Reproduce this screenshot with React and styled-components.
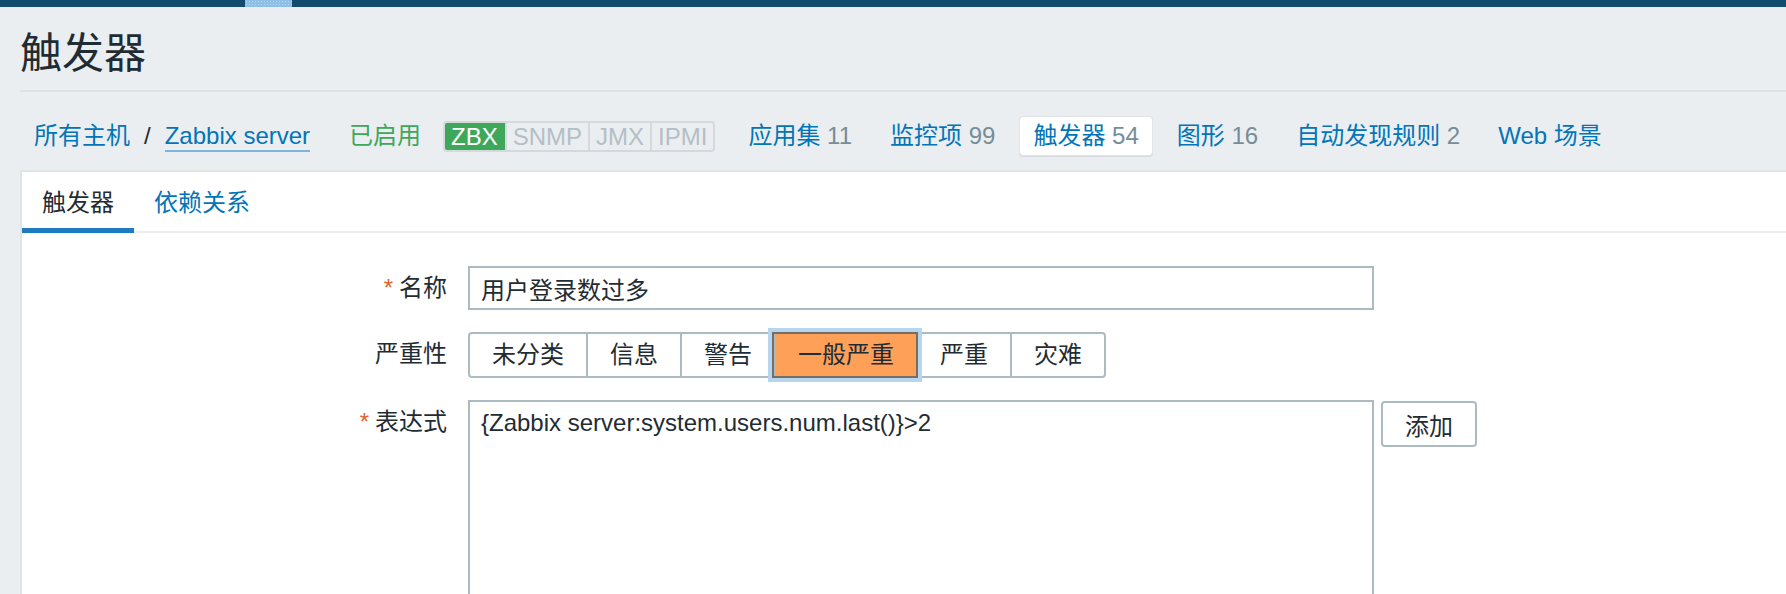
import React, { useState } from 'react'
import styled, { createGlobalStyle } from 'styled-components'

const GlobalStyle = createGlobalStyle`
  html, body {
    margin: 0;
    padding: 0;
    background: #ebeef0;
    overflow: hidden;
  }
  body {
    font-family: "Liberation Sans", "Noto Sans CJK SC", sans-serif;
    color: #1f2c33;
  }
`

const severities = ['未分类', '信息', '警告', '一般严重', '严重', '灾难']

const navItems = [
    { label: '应用集', count: 11 },
    { label: '监控项', count: 99 },
    { label: '触发器', count: 54, active: true },
    { label: '图形', count: 16 },
    { label: '自动发现规则', count: 2 },
    { label: 'Web 场景' },
]

function App() {
    const [severity, setSeverity] = useState('一般严重')
    const [tab, setTab] = useState('triggers')

    return (
        <>
            <GlobalStyle />
            <TopBar>
                <TopMark />
            </TopBar>
            <Page>
                <Title>触发器</Title>
                <NavBar>
                    <Crumbs>
                        <CrumbLink>所有主机</CrumbLink>
                        <Slash>/</Slash>
                        <CrumbLink $underline>Zabbix server</CrumbLink>
                    </Crumbs>
                    <Status>已启用</Status>
                    <Badges>
                        <Badge $on>ZBX</Badge>
                        <Badge>SNMP</Badge>
                        <Badge>JMX</Badge>
                        <Badge>IPMI</Badge>
                    </Badges>
                    <NavList>
                        {navItems.map((item) => (
                            <NavTab key={item.label} $active={item.active}>
                                {item.label}
                                {item.count !== undefined && <Count> {item.count}</Count>}
                            </NavTab>
                        ))}
                    </NavList>
                </NavBar>
                <Panel>
                    <TabStrip>
                        <Tab $active={tab === 'triggers'} onClick={() => setTab('triggers')}>触发器</Tab>
                        <Tab $active={tab === 'deps'} onClick={() => setTab('deps')}>依赖关系</Tab>
                    </TabStrip>
                    <Form>
                        <Label><Req>*</Req>名称</Label>
                        <TextInput defaultValue='用户登录数过多' />

                        <Label>严重性</Label>
                        <Severity>
                            {severities.map((s) => (
                                <SevButton key={s} $selected={s === severity} onClick={() => setSeverity(s)}>
                                    {s}
                                </SevButton>
                            ))}
                        </Severity>

                        <Label><Req>*</Req>表达式</Label>
                        <ExprRow>
                            <TextArea defaultValue='{Zabbix server:system.users.num.last()}>2' />
                            <AddButton>添加</AddButton>
                        </ExprRow>
                    </Form>
                </Panel>
            </Page>
        </>
    )
}

export default App

const TopBar = styled.div`
    height: 7px;
    background: #124b6e;
    padding-left: 245px;
    display: flex;
`

const TopMark = styled.div`
    width: 47px;
    background: #8fbfe6;
    background-image: radial-gradient(#b7d6f0 0.8px, transparent 0.9px);
    background-size: 3px 3px;
`

const Page = styled.div`
    padding-left: 20px;
`

const Title = styled.h1`
    margin: 0;
    padding-top: 22px;
    padding-bottom: 11px;
    font-size: 42px;
    line-height: 50px;
    font-weight: normal;
    color: #1f2c33;
    border-bottom: 2px solid #dde2e6;
`

const NavBar = styled.div`
    display: flex;
    align-items: center;
    height: 40px;
    margin-top: 24px;
    margin-bottom: 14px;
    font-size: 24px;
`

const Crumbs = styled.div`
    display: flex;
    align-items: center;
    gap: 14px;
    padding-left: 14px;
`

const CrumbLink = styled.a`
    color: #0275b8;
    line-height: 28px;
    border-bottom: 2px solid ${(p) => (p.$underline ? '#7db4dc' : 'transparent')};
    margin-top: 2px;
    cursor: pointer;
`

const Slash = styled.span`
    color: #1f2c33;
    line-height: 28px;
`

const Status = styled.span`
    color: #3da75a;
    margin-left: 39px;
    line-height: 32px;
`

const Badges = styled.div`
    display: flex;
    margin-left: 22px;
    height: 31px;
    border-radius: 4px;
    overflow: hidden;
    border: 2px solid #d3d9dd;
    box-sizing: border-box;
`

const Badge = styled.span`
    padding: 0 6px;
    line-height: 27px;
    background: ${(p) => (p.$on ? '#3da75a' : '#ebeef0')};
    color: ${(p) => (p.$on ? '#ffffff' : '#b3bfc7')};
    border-left: 2px solid #d3d9dd;
    &:first-child {
        border-left: none;
        margin: -2px 0 -2px -2px;
        padding: 2px 7px 2px 8px;
    }
`

const NavList = styled.div`
    display: flex;
    align-items: center;
    gap: 10px;
    margin-left: 19px;
`

const NavTab = styled.a`
    padding: 3px 13px;
    line-height: 32px;
    color: #0275b8;
    border-radius: 4px;
    border: 1px solid ${(p) => (p.$active ? '#dfe4e7' : 'transparent')};
    background: ${(p) => (p.$active ? '#ffffff' : 'transparent')};
    box-shadow: ${(p) => (p.$active ? '0 1px 0 #d5dbdf' : 'none')};
    white-space: nowrap;
    cursor: pointer;
`

const Count = styled.span`
    color: #768d99;
`

const Panel = styled.div`
    background: #ffffff;
    border: 2px solid #dfe4e7;
    border-right: none;
    border-bottom: none;
`

const TabStrip = styled.div`
    display: flex;
    border-bottom: 2px solid #ebeef0;
`

const Tab = styled.div`
    padding: 6px 20px 0;
    line-height: 50px;
    font-size: 24px;
    margin-bottom: -2px;
    color: ${(p) => (p.$active ? '#1f2c33' : '#0275b8')};
    border-bottom: 5px solid ${(p) => (p.$active ? '#1f7bbf' : 'transparent')};
    cursor: pointer;
`

const Form = styled.div`
    display: grid;
    grid-template-columns: 425px 1fr;
    column-gap: 21px;
    row-gap: 22px;
    padding-top: 33px;
    font-size: 24px;
`

const Label = styled.div`
    text-align: right;
    line-height: 44px;
    color: #1f2c33;
    white-space: nowrap;
`

const Req = styled.span`
    color: #e0622c;
    margin-right: 6px;
`

const TextInput = styled.input`
    box-sizing: border-box;
    width: 906px;
    height: 44px;
    padding: 0 11px;
    border: 2px solid #acbbc2;
    font: inherit;
    font-size: 24px;
    color: #1f2c33;
    outline: none;
`

const Severity = styled.div`
    display: flex;
    justify-self: start;
    border: 2px solid #acbbc2;
    border-radius: 4px;
    height: 46px;
    box-sizing: border-box;
`

const SevButton = styled.div`
    padding: 0 22px;
    line-height: 42px;
    border-left: 2px solid #acbbc2;
    cursor: pointer;
    &:first-child {
        border-left: none;
    }
    ${(p) => p.$selected && `
        background: #ffa059;
        outline: 2px solid #776d63;
        box-shadow: 0 0 0 6px #b6d6ef;
        position: relative;
        z-index: 1;
    `}
`

const ExprRow = styled.div`
    display: flex;
    align-items: flex-start;
    gap: 7px;
`

const TextArea = styled.textarea`
    box-sizing: border-box;
    width: 906px;
    height: 260px;
    padding: 7px 11px;
    border: 2px solid #acbbc2;
    font: inherit;
    font-size: 24px;
    line-height: 28px;
    color: #1f2c33;
    resize: none;
    outline: none;
`

const AddButton = styled.button`
    box-sizing: border-box;
    height: 46px;
    padding: 0 22px;
    margin-top: 1px;
    border: 2px solid #acbbc2;
    border-radius: 4px;
    background: #ffffff;
    font: inherit;
    font-size: 24px;
    color: #1f2c33;
    cursor: pointer;
`
